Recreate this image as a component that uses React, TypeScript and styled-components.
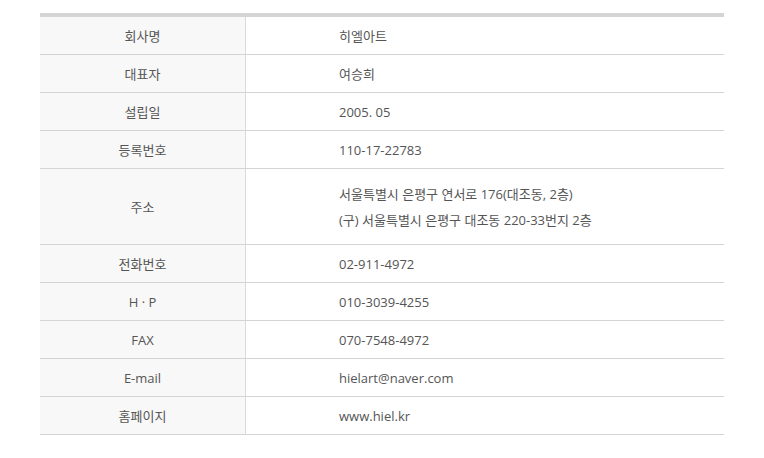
import React from "react";
import styled, { createGlobalStyle } from "styled-components";

const Global = createGlobalStyle`
  html, body { margin: 0; padding: 0; background: #fff; }
  body { font-family: "Open Sans", "Noto Sans CJK KR", sans-serif; }
`;

const Wrap = styled.div`
  padding: 13px 40px 0 40px;
`;

const Table = styled.div`
  width: 684px;
  border-top: 4px solid #d4d4d4;
  display: grid;
  grid-template-columns: 206px 1fr;
`;

const Label = styled.div<{ $h: number }>`
  height: ${(p) => p.$h}px;
  background: #f8f8f8;
  border-right: 1px solid #d9d9d9;
  border-bottom: 1px solid #d4d4d4;
  display: flex;
  align-items: center;
  justify-content: center;
  font-size: 13px;
  color: #555;
`;

const Value = styled.div<{ $h: number }>`
  height: ${(p) => p.$h}px;
  border-bottom: 1px solid #d4d4d4;
  display: flex;
  flex-direction: column;
  justify-content: center;
  padding-left: 93px;
  font-size: 13px;
  color: #555;
  line-height: 26px;
`;

const rows: { label: string; value: string[]; h: number }[] = [
  { label: "회사명", value: ["히엘아트"], h: 37 },
  { label: "대표자", value: ["여승희"], h: 37 },
  { label: "설립일", value: ["2005. 05"], h: 37 },
  { label: "등록번호", value: ["110-17-22783"], h: 37 },
  {
    label: "주소",
    value: ["서울특별시 은평구 연서로 176(대조동, 2층)", "(구) 서울특별시 은평구 대조동 220-33번지 2층"],
    h: 75,
  },
  { label: "전화번호", value: ["02-911-4972"], h: 37 },
  { label: "H · P", value: ["010-3039-4255"], h: 37 },
  { label: "FAX", value: ["070-7548-4972"], h: 37 },
  { label: "E-mail", value: ["hielart@naver.com"], h: 37 },
  { label: "홈페이지", value: ["www.hiel.kr"], h: 37 },
];

export default function App() {
  return (
    <>
      <Global />
      <Wrap>
        <Table>
          {rows.map((r) => (
            <React.Fragment key={r.label}>
              <Label $h={r.h}>{r.label}</Label>
              <Value $h={r.h}>
                {r.value.map((v) => (
                  <div key={v}>{v}</div>
                ))}
              </Value>
            </React.Fragment>
          ))}
        </Table>
      </Wrap>
    </>
  );
}
